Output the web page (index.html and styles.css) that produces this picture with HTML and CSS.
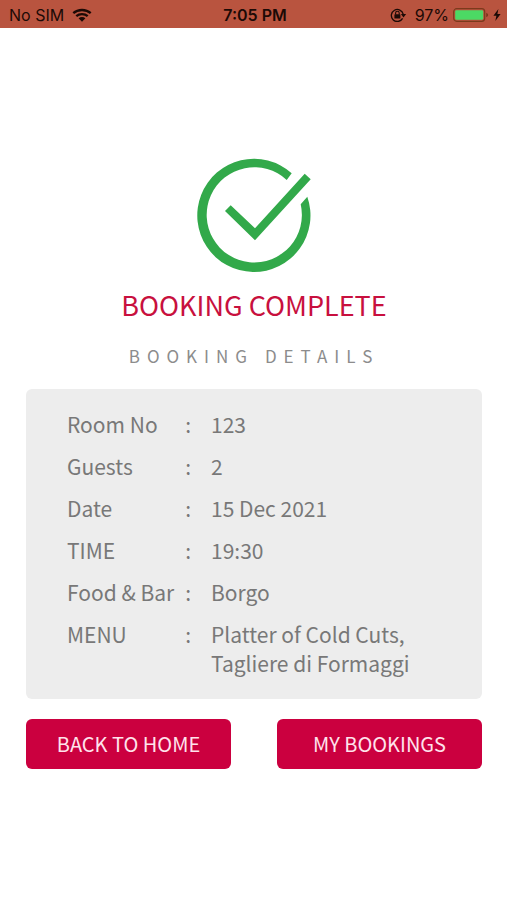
FILE: index.html
```html
<!DOCTYPE html>
<html lang="en">
<head>
<meta charset="utf-8">
<meta name="viewport" content="width=device-width, initial-scale=1">
<title>Booking complete</title>
<link rel="stylesheet" href="styles.css">
</head>
<body>
<header class="status">
  <div class="status-left">
    <span>No SIM</span>
    <svg width="20" height="14" viewBox="0 0 20 14" aria-hidden="true">
      <path d="M1.3 5.2C6 .9 14 .9 18.7 5.2M4.3 8.2C7.5 5.3 12.5 5.3 15.7 8.2" fill="none" stroke="currentColor" stroke-width="2.3"/>
      <path d="M6.6 10.3C8.5 8.6 11.5 8.6 13.4 10.3L10 13.7Z" fill="currentColor"/>
    </svg>
  </div>
  <span class="clock">7:05 PM</span>
  <div class="status-right">
    <svg class="lock" width="17" height="14" viewBox="0 0 17 14" aria-hidden="true">
      <path d="M12.6 10.4A6 6 0 1 1 13.2 6.2" fill="none" stroke="currentColor" stroke-width="1.3"/>
      <path d="M10.9 6H16.1L13.5 9.4Z" fill="currentColor"/>
      <rect x="4.4" y="6.2" width="6" height="4.3" rx=".6" fill="currentColor"/>
      <path d="M5.6 6.5V5A1.8 1.8 0 0 1 9.2 5V6.5" fill="none" stroke="currentColor" stroke-width="1.1"/>
    </svg>
    <span>97%</span>
    <svg class="battery" width="36" height="14" viewBox="0 0 36 14" aria-hidden="true">
      <rect x=".7" y=".7" width="31" height="12.6" rx="3" fill="none" stroke="#7b3a1c" stroke-width="1.2"/>
      <rect x="2.2" y="2.2" width="28" height="9.6" rx="1.4" fill="#4cd964"/>
      <path d="M33.2 4.7Q35.2 5.4 35.2 7T33.2 9.3Z" fill="#7b3a1c"/>
    </svg>
    <svg width="8" height="12" viewBox="0 0 8 12" aria-hidden="true">
      <path d="M5.4 0L.4 6.8H3.4L2.3 12L7.6 4.9H4.4Z" fill="currentColor"/>
    </svg>
  </div>
</header>
<main class="page">
  <svg class="tick" width="114" height="114" viewBox="0 0 114 114" role="img" aria-label="Complete">
    <path d="M94.7 14.3A56.6 56.6 0 1 0 110.3 37.7L103.7 45.3A47.6 47.6 0 1 1 89.7 21Z"/>
    <path d="M28 52L33.7 46.3L58 69.3L107.7 14.7L113.7 20.3L58 81.3Z"/>
  </svg>
  <h1 class="title">BOOKING COMPLETE</h1>
  <h2 class="subtitle">BOOKING DETAILS</h2>
  <dl class="card">
    <dt>Room No <span>:</span></dt><dd>123</dd>
    <dt>Guests <span>:</span></dt><dd>2</dd>
    <dt>Date <span>:</span></dt><dd>15 Dec 2021</dd>
    <dt>TIME <span>:</span></dt><dd>19:30</dd>
    <dt>Food &amp; Bar <span>:</span></dt><dd>Borgo</dd>
    <dt>MENU <span>:</span></dt><dd>Platter of Cold Cuts,<br>Tagliere di Formaggi</dd>
  </dl>
  <div class="actions">
    <button type="button">BACK TO HOME</button>
    <button type="button">MY BOOKINGS</button>
  </div>
</main>
</body>
</html>
```
FILE: styles.css
```css
* {
  box-sizing: border-box;
}

body {
  margin: 0;
  background: #fff;
  color: #787878;
  font-family: "Noto Sans CJK JP", sans-serif;
}

.status {
  display: grid;
  grid-template-columns: 1fr auto 1fr;
  align-items: center;
  height: 28px;
  padding: 2px 6px 0 9px;
  background: #b9543f;
  color: #1c0a06;
  font: 16px/24px Inter, sans-serif;
}

.status-left,
.status-right {
  display: flex;
  align-items: center;
  gap: 8px;
}

.status-right {
  justify-content: flex-end;
  gap: 4px;
}

.lock {
  margin-right: 4px;
}

.clock {
  font-weight: 600;
}

.page {
  display: flex;
  flex-direction: column;
  padding: 131px 25px 24px 26px;
}

.tick {
  align-self: center;
  overflow: visible;
  fill: #32a94a;
}

.title {
  margin: 12px 0 0;
  color: #c8103e;
  font-size: 27px;
  font-weight: 400;
  line-height: 40px;
  text-align: center;
}

.subtitle {
  margin: 19px 0 0;
  color: #8c8c8c;
  font-size: 17px;
  font-weight: 400;
  line-height: 24px;
  letter-spacing: 7px;
  text-align: center;
}

.card {
  display: grid;
  grid-template-columns: 124px 1fr;
  column-gap: 20px;
  row-gap: 13px;
  margin: 21px 0 0;
  padding: 21px 20px 21px 41px;
  border-radius: 6px;
  background: #ededed;
  font-size: 21px;
  line-height: 29px;
}

.card dt {
  display: flex;
  justify-content: space-between;
}

.card dd {
  margin: 0;
}

.actions {
  display: grid;
  grid-template-columns: 1fr 1fr;
  gap: 46px;
  margin-top: 20px;
}

.actions button {
  height: 50px;
  padding: 0 0 2px;
  border: 0;
  border-radius: 6px;
  background: #cb003f;
  color: #ffe3ec;
  font: inherit;
  font-size: 20px;
}
```
